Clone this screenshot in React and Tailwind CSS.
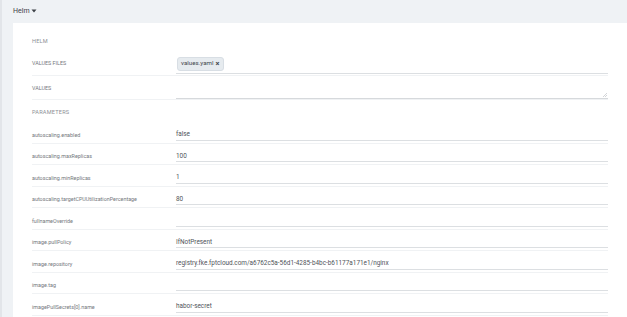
import React from 'react'

const PARAMS = [
  ['autoscaling.enabled', 'false'],
  ['autoscaling.maxReplicas', '100'],
  ['autoscaling.minReplicas', '1'],
  ['autoscaling.targetCPUUtilizationPercentage', '80'],
  ['fullnameOverride', ''],
  ['image.pullPolicy', 'IfNotPresent'],
  ['image.repository', 'registry.fke.fptcloud.com/a6762c5a-56d1-4285-b4bc-b61177a171e1/nginx'],
  ['image.tag', ''],
  ['imagePullSecrets[0].name', 'habor-secret'],
]

function ParamRow({ label, value }) {
  return (
    <div className="flex items-center h-[21.5px] border-b border-[#f0f2f4]">
      <div className="w-[144px] shrink-0 pt-[5px] text-[5.4px] text-[#74787d]">{label}</div>
      <div className="flex-1 self-end mb-[2px] h-[16px] border-b-[1.5px] border-[#dcdfe2] flex items-end pb-[0.5px] text-[6.4px] leading-[9px] text-[#50545a]">
        {value}
      </div>
    </div>
  )
}

export default function App() {
  return (
    <div className="w-[627px] h-[317px] overflow-hidden bg-[#eff2f5] border-l-2 border-[#e2e5e9]" style={{ fontFamily: 'Roboto, "Noto Sans", sans-serif' }}>
      <div className="h-[22px] flex items-center pl-[11px] text-[7px] text-[#3d4147]">
        Helm
        <svg width="6" height="4" viewBox="0 0 6 4" className="ml-[1.5px]">
          <path d="M0.5 0.5 L5.5 0.5 L3 3.5 Z" fill="#3d4147" />
        </svg>
      </div>
      <div className="ml-[11px] mt-[1px] bg-white pl-[19px] pr-[19px] pt-[10px] h-[300px]">
        <div className="h-[16px] flex items-center text-[5.6px] text-[#8d9196] tracking-[0.2px]">HELM</div>

        <div className="flex items-center h-[27px] border-b border-[#f0f2f4]">
          <div className="w-[144px] shrink-0 pt-[2px] text-[5.4px] text-[#74787d]">VALUES FILES</div>
          <div className="flex-1 self-end mb-[1.5px] h-[19px] border-b-[1.5px] border-[#dcdfe2] flex items-end pb-[1.5px]">
            <span className="ml-[1px] inline-flex items-center h-[14px] px-[3px] rounded-[3px] bg-[#e6ebef] border border-[#d8dee4] text-[6.2px] text-[#44484d]">
              values.yaml
              <span className="ml-[2px] text-[7.5px] font-bold leading-none">×</span>
            </span>
          </div>
        </div>

        <div className="flex items-center h-[24px] border-b border-[#f0f2f4]">
          <div className="w-[144px] shrink-0 pt-[1px] text-[5.4px] text-[#74787d]">VALUES</div>
          <div className="flex-1 self-end h-[21px] border-b-[1.5px] border-[#d6d9dc] relative">
            <svg width="4" height="4" viewBox="0 0 4 4" className="absolute right-[1px] bottom-[1px]">
              <path d="M0 4 L4 0 M2 4 L4 2" stroke="#b5b9bd" strokeWidth="0.6" />
            </svg>
          </div>
        </div>

        <div className="h-[22px] flex items-center pt-[3px] text-[5.6px] text-[#8d9196] tracking-[0.2px]">PARAMETERS</div>

        {PARAMS.map(([l, v]) => (
          <ParamRow key={l} label={l} value={v} />
        ))}
      </div>
    </div>
  )
}
